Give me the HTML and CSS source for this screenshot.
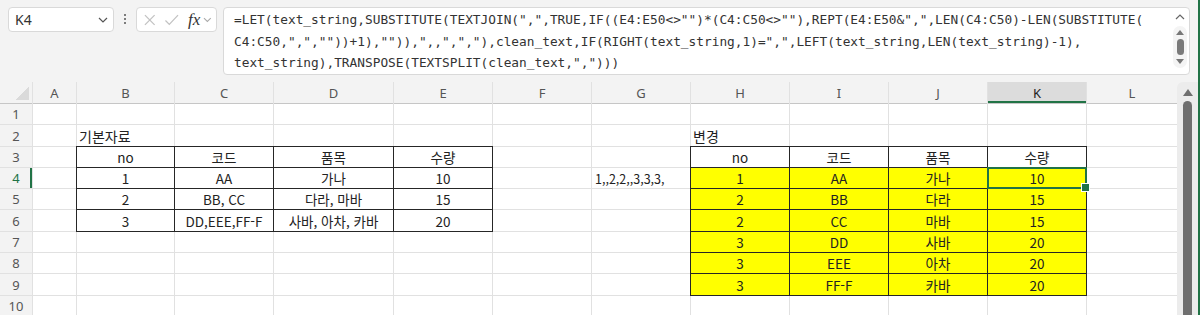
FILE: index.html
```html
<!DOCTYPE html>
<html lang="ko">
<head>
    <meta charset="UTF-8">
    <title>Sheet - TEXTSPLIT</title>
    <link rel="stylesheet" href="styles.css">
</head>
<body>
    <div class="toolbar">
        <div class="name-box">
            <span>K4</span>
            <svg width="10" height="6" viewBox="0 0 10 6"><polyline points="1,1 5,5 9,1" fill="none" stroke="#555" stroke-width="1.2"/></svg>
        </div>
        <div class="dots"><i></i><i></i><i></i></div>
        <div class="fx-box">
            <svg width="14" height="14" viewBox="0 0 14 14"><path d="M2 2 L12 12 M12 2 L2 12" stroke="#c2c2c2" stroke-width="1.3" fill="none"/></svg>
            <svg width="16" height="14" viewBox="0 0 16 14"><polyline points="1.5,7.5 5.5,11.5 14.5,2" stroke="#c2c2c2" stroke-width="1.3" fill="none"/></svg>
            <span class="fx">fx</span>
            <svg width="9" height="6" viewBox="0 0 9 6"><polyline points="1,1 4.5,4.5 8,1" fill="none" stroke="#aaa" stroke-width="1.1"/></svg>
        </div>
        <div class="formula">
            <pre class="formula-text">=LET(text_string,SUBSTITUTE(TEXTJOIN(",",TRUE,IF((E4:E50&lt;&gt;"")*(C4:C50&lt;&gt;""),REPT(E4:E50&amp;",",LEN(C4:C50)-LEN(SUBSTITUTE(
C4:C50,",",""))+1),"")),",,",","),clean_text,IF(RIGHT(text_string,1)=",",LEFT(text_string,LEN(text_string)-1),
text_string),TRANSPOSE(TEXTSPLIT(clean_text,",")))</pre>
            <div class="formula-side">
                <svg class="collapse" width="10" height="6" viewBox="0 0 10 6"><polyline points="1,5 5,1 9,5" fill="none" stroke="#666" stroke-width="1.2"/></svg>
                <div class="mini-track">
                    <svg width="8" height="5" viewBox="0 0 8 5"><polygon points="0,5 4,0 8,5" fill="#777"/></svg>
                    <div class="mini-thumb"></div>
                    <svg width="8" height="5" viewBox="0 0 8 5"><polygon points="0,0 8,0 4,5" fill="#777"/></svg>
                </div>
            </div>
        </div>
    </div>

    <div class="main">
        <div class="sheet">
            <!-- column headers -->
            <div class="ch corner"></div>
            <div class="ch">A</div><div class="ch">B</div><div class="ch">C</div><div class="ch">D</div>
            <div class="ch">E</div><div class="ch">F</div><div class="ch">G</div><div class="ch">H</div>
            <div class="ch">I</div><div class="ch">J</div><div class="ch sel">K</div><div class="ch">L</div>

            <!-- source table B3:E6 -->
            <div class="data t1">
                <div class="c">no</div><div class="c">코드</div><div class="c">품목</div><div class="c">수량</div>
                <div class="c">1</div><div class="c">AA</div><div class="c">가나</div><div class="c">10</div>
                <div class="c">2</div><div class="c">BB, CC</div><div class="c">다라, 마바</div><div class="c">15</div>
                <div class="c">3</div><div class="c">DD,EEE,FF-F</div><div class="c">사바, 아차, 카바</div><div class="c">20</div>
            </div>

            <!-- result table H3:K9 -->
            <div class="data t2">
                <div class="c">no</div><div class="c">코드</div><div class="c">품목</div><div class="c">수량</div>
                <div class="c y">1</div><div class="c y">AA</div><div class="c y">가나</div><div class="c y active">10</div>
                <div class="c y">2</div><div class="c y">BB</div><div class="c y">다라</div><div class="c y">15</div>
                <div class="c y">2</div><div class="c y">CC</div><div class="c y">마바</div><div class="c y">15</div>
                <div class="c y">3</div><div class="c y">DD</div><div class="c y">사바</div><div class="c y">20</div>
                <div class="c y">3</div><div class="c y">EEE</div><div class="c y">아차</div><div class="c y">20</div>
                <div class="c y">3</div><div class="c y">FF-F</div><div class="c y">카바</div><div class="c y">20</div>
            </div>

            <!-- row 1 -->
            <div class="rh">1</div>
            <div></div><div></div><div></div><div></div><div></div><div></div>
            <div></div><div></div><div></div><div></div><div></div><div></div>
            <!-- row 2 -->
            <div class="rh">2</div>
            <div></div><div class="txt">기본자료</div><div></div><div></div><div></div><div></div>
            <div></div><div class="txt">변경</div><div></div><div></div><div></div><div></div>
            <!-- row 3 -->
            <div class="rh">3</div>
            <div></div><div></div><div></div><div></div>
            <!-- row 4 -->
            <div class="rh sel">4</div>
            <div></div><div></div><div class="txt small">1,,2,2,,3,3,3,</div><div></div>
            <!-- row 5 -->
            <div class="rh">5</div>
            <div></div><div></div><div></div><div></div>
            <!-- row 6 -->
            <div class="rh">6</div>
            <div></div><div></div><div></div><div></div>
            <!-- row 7 -->
            <div class="rh">7</div>
            <div></div><div></div><div></div><div></div><div></div><div></div><div></div><div></div>
            <!-- row 8 -->
            <div class="rh">8</div>
            <div></div><div></div><div></div><div></div><div></div><div></div><div></div><div></div>
            <!-- row 9 -->
            <div class="rh">9</div>
            <div></div><div></div><div></div><div></div><div></div><div></div><div></div><div></div>
            <!-- row 10 -->
            <div class="rh">10</div>
            <div></div><div></div><div></div><div></div><div></div><div></div>
            <div></div><div></div><div></div><div></div><div></div><div></div>
        </div>
        <div class="vscroll">
            <svg width="10" height="7" viewBox="0 0 10 7"><polygon points="0,7 5,0 10,7" fill="#6f6f6f"/></svg>
            <div class="vthumb"></div>
        </div>
    </div>
</body>
</html>
```

FILE: styles.css
```css
* {
    box-sizing: border-box;
}
body {
    margin: 0;
    width: 1200px;
    height: 315px;
    overflow: hidden;
    background: #f3f3f3;
    border-right: 2px solid #217346;
    font-family: "Noto Sans", "Noto Sans CJK KR", sans-serif;
    color: #222;
}

/* formula bar */
.toolbar {
    height: 82px;
    display: flex;
    align-items: flex-start;
    padding: 7px 0 0 8px;
}
.name-box {
    width: 106px;
    height: 25px;
    background: #fff;
    border: 1px solid #d9d9d9;
    border-radius: 4px;
    display: flex;
    align-items: center;
    justify-content: space-between;
    padding: 0 5px 0 6px;
    font-size: 14px;
    color: #333;
}
.dots {
    width: 22px;
    display: flex;
    flex-direction: column;
    align-items: center;
    gap: 2px;
    padding-top: 7px;
}
.dots i {
    width: 2px;
    height: 2px;
    background: #555;
    border-radius: 1px;
}
.fx-box {
    width: 81px;
    height: 25px;
    background: #fff;
    border: 1px solid #d9d9d9;
    border-radius: 4px;
    display: flex;
    align-items: center;
    padding: 0 4px 0 6px;
    gap: 7px;
}
.fx-box .fx {
    font-family: "Liberation Serif", serif;
    font-style: italic;
    font-size: 17px;
    color: #333;
    margin-left: 2px;
    margin-right: -4px;
    line-height: 1;
}
.formula {
    margin-left: 6px;
    width: 967px;
    height: 68px;
    background: #fff;
    border: 1px solid #d9d9d9;
    border-radius: 4px;
    display: flex;
}
.formula-text {
    flex: 1;
    margin: 0;
    padding: 1px 0 0 10px;
    font-family: "DejaVu Sans Mono", monospace;
    font-size: 12.8px;
    line-height: 21.5px;
    color: #333;
    white-space: pre;
}
.formula-side {
    width: 18px;
    display: flex;
    flex-direction: column;
    align-items: center;
    padding-top: 6px;
}
.collapse {
    margin-bottom: 6px;
}
.mini-track {
    width: 14px;
    height: 42px;
    background: #f4f4f4;
    border-radius: 7px;
    display: flex;
    flex-direction: column;
    align-items: center;
    justify-content: space-between;
    padding: 4px 0;
}
.mini-thumb {
    width: 7px;
    height: 16px;
    border-radius: 4px;
    background: #7a7a7a;
}

/* grid */
.main {
    display: flex;
    height: 233px;
}
.sheet {
    width: 1177px;
    overflow: hidden;
    display: grid;
    grid-template-columns: 32px 43px 97px 98px 119px 98px 98px 98px 98px 98px 98px 98px 1fr;
    grid-template-rows: 21px 20px 21px 20px 20px 20px 21px 20px 20px 21px 20px;
    gap: 1px;
    background: #e1e1e1;
}
.sheet > div {
    background: #fff;
}
.sheet > .ch {
    background: #f3f3f3;
    box-shadow: 0 1px 0 #c6c6c6;
    font-size: 13px;
    color: #555;
    display: flex;
    align-items: center;
    justify-content: center;
}
.sheet > .ch.sel {
    background: #dcdcdc;
    color: #222;
    border-bottom: 2px solid #217346;
    padding-top: 2px;
}
.sheet > .corner {
    background: #f3f3f3 linear-gradient(135deg, transparent 50%, #dadada 50%) no-repeat right 3px bottom 3px / 14px 14px;
}
.sheet > .rh {
    background: #f3f3f3;
    font-size: 13px;
    color: #555;
    display: flex;
    align-items: center;
    justify-content: center;
}
.sheet > .rh.sel {
    box-shadow: inset -2px 0 0 #217346;
    color: #217346;
}
.sheet > .txt {
    font-family: "Noto Sans CJK KR", sans-serif;
    font-size: 14px;
    padding-left: 2px;
    display: flex;
    align-items: center;
    white-space: nowrap;
}
.sheet > .txt.small {
    font-size: 12.5px;
    padding-left: 3px;
}

/* bordered tables */
.sheet > .data {
    margin: -1px;
    padding: 1px;
    display: grid;
    gap: 1px;
    background: #262626;
}
.t1 {
    grid-column: 3 / 7;
    grid-row: 4 / 8;
    grid-template-columns: 97px 98px 119px 98px;
    grid-template-rows: 20px 20px 20px 21px;
}
.t2 {
    grid-column: 9 / 13;
    grid-row: 4 / 11;
    grid-template-columns: 98px 98px 98px 98px;
    grid-template-rows: 20px 20px 20px 21px 20px 20px 21px;
}
.c {
    background: #fff;
    font-family: "Noto Sans CJK KR", sans-serif;
    font-size: 13.5px;
    display: flex;
    align-items: center;
    justify-content: center;
    white-space: nowrap;
    color: #222;
}
.c.y {
    background: #ffff00;
}
.c.active {
    position: relative;
    z-index: 1;
}
.c.active::after {
    content: "";
    position: absolute;
    inset: -1px;
    border: 2px solid #217346;
}
.c.active::before {
    content: "";
    position: absolute;
    right: -4px;
    bottom: -4px;
    width: 7px;
    height: 7px;
    background: #217346;
    border: 1px solid #fff;
    z-index: 2;
}

/* sheet scrollbar */
.vscroll {
    width: 21px;
    background: #ececec;
    border-radius: 6px 0 0 0;
    display: flex;
    flex-direction: column;
    align-items: center;
    padding-top: 7px;
}
.vthumb {
    margin-top: 5px;
    width: 9px;
    flex: 1;
    background: #6f6f6f;
    border-radius: 5px 5px 0 0;
}
```
